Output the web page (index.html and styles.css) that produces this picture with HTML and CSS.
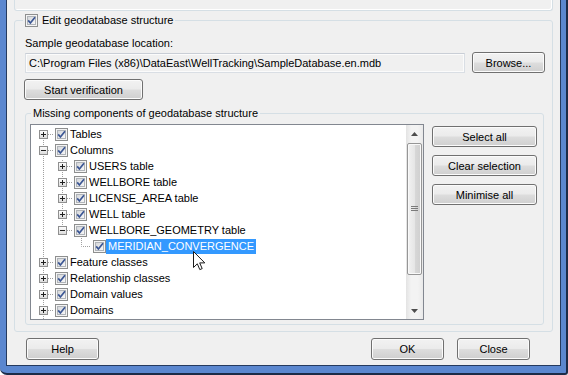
FILE: index.html
```html
<!DOCTYPE html>
<html lang="en">
<head>
    <meta charset="UTF-8">
    <title>Geodatabase structure</title>
    <link rel="stylesheet" href="styles.css">
</head>
<body>

    <svg class="defs" width="0" height="0">
        <defs>
            <linearGradient id="cbFill" x1="0" y1="0" x2="1" y2="1">
                <stop offset="0" stop-color="#d3d5d8"/>
                <stop offset="1" stop-color="#f9f9fa"/>
            </linearGradient>
            <linearGradient id="expFill" x1="0" y1="0" x2="0" y2="1">
                <stop offset="0" stop-color="#ffffff"/>
                <stop offset="1" stop-color="#d9d9d9"/>
            </linearGradient>
            <symbol id="cb" viewBox="0 0 13 13">
                <rect x="0.5" y="0.5" width="12" height="12" fill="#f4f4f4" stroke="#8e8f8f"/>
                <rect x="2.5" y="2.5" width="8" height="8" fill="url(#cbFill)" stroke="#b0b4b9"/>
                <path d="M3.2 6.4 L5.4 9 L10 3.2" fill="none" stroke="#3b5694" stroke-width="1.7"/>
            </symbol>
            <symbol id="plus" viewBox="0 0 9 9">
                <rect x="0.5" y="0.5" width="8" height="8" fill="url(#expFill)" stroke="#8f8f8f"/>
                <path d="M2 4.5 H7 M4.5 2 V7" stroke="#1f1f1f"/>
            </symbol>
            <symbol id="minus" viewBox="0 0 9 9">
                <rect x="0.5" y="0.5" width="8" height="8" fill="url(#expFill)" stroke="#8f8f8f"/>
                <path d="M2 4.5 H7" stroke="#1f1f1f"/>
            </symbol>
        </defs>
    </svg>

    <div class="frame">
        <div class="client">
            <div class="prev-group"></div>

            <fieldset class="group main-group">
                <legend class="check-legend">
                    <svg class="cb" width="13" height="13"><use href="#cb"/></svg>
                    <span>Edit geodatabase structure</span>
                </legend>
                <div class="main-body">
                    <div class="label">Sample geodatabase location:</div>
                    <div class="path-row">
                        <div class="textbox">C:\Program Files (x86)\DataEast\WellTracking\SampleDatabase.en.mdb</div>
                        <button class="btn browse">Browse...</button>
                    </div>
                    <button class="btn verify">Start verification</button>

                    <fieldset class="group missing-group">
                        <legend class="text-legend">Missing components of geodatabase structure</legend>
                        <div class="missing-body">
                            <div class="tree">
                                <svg class="tree-lines" width="375" height="194">
                                    <g stroke="#a0a0a0" stroke-dasharray="1 1" fill="none">
                                        <path d="M12.5 9 V194"/>
                                        <path d="M17 9.5 H22 M17 25.5 H22 M17 137.5 H22 M17 153.5 H22 M17 169.5 H22 M17 185.5 H22"/>
                                        <path d="M31.5 35 V106"/>
                                        <path d="M36 41.5 H41 M36 57.5 H41 M36 73.5 H41 M36 89.5 H41 M36 105.5 H41"/>
                                        <path d="M50.5 113 V121.5 H60"/>
                                    </g>
                                </svg>
                                <div class="rows">
                                    <div class="row lvl0"><svg class="exp" width="9" height="9"><use href="#plus"/></svg><svg class="cb" width="13" height="13"><use href="#cb"/></svg><span class="txt">Tables</span></div>
                                    <div class="row lvl0"><svg class="exp" width="9" height="9"><use href="#minus"/></svg><svg class="cb" width="13" height="13"><use href="#cb"/></svg><span class="txt">Columns</span></div>
                                    <div class="row lvl1"><svg class="exp" width="9" height="9"><use href="#plus"/></svg><svg class="cb" width="13" height="13"><use href="#cb"/></svg><span class="txt">USERS table</span></div>
                                    <div class="row lvl1"><svg class="exp" width="9" height="9"><use href="#plus"/></svg><svg class="cb" width="13" height="13"><use href="#cb"/></svg><span class="txt">WELLBORE table</span></div>
                                    <div class="row lvl1"><svg class="exp" width="9" height="9"><use href="#plus"/></svg><svg class="cb" width="13" height="13"><use href="#cb"/></svg><span class="txt">LICENSE_AREA table</span></div>
                                    <div class="row lvl1"><svg class="exp" width="9" height="9"><use href="#plus"/></svg><svg class="cb" width="13" height="13"><use href="#cb"/></svg><span class="txt">WELL table</span></div>
                                    <div class="row lvl1"><svg class="exp" width="9" height="9"><use href="#minus"/></svg><svg class="cb" width="13" height="13"><use href="#cb"/></svg><span class="txt">WELLBORE_GEOMETRY table</span></div>
                                    <div class="row lvl2"><span class="exp"></span><svg class="cb" width="13" height="13"><use href="#cb"/></svg><span class="txt selected">MERIDIAN_CONVERGENCE</span></div>
                                    <div class="row lvl0"><svg class="exp" width="9" height="9"><use href="#plus"/></svg><svg class="cb" width="13" height="13"><use href="#cb"/></svg><span class="txt">Feature classes</span></div>
                                    <div class="row lvl0"><svg class="exp" width="9" height="9"><use href="#plus"/></svg><svg class="cb" width="13" height="13"><use href="#cb"/></svg><span class="txt">Relationship classes</span></div>
                                    <div class="row lvl0"><svg class="exp" width="9" height="9"><use href="#plus"/></svg><svg class="cb" width="13" height="13"><use href="#cb"/></svg><span class="txt">Domain values</span></div>
                                    <div class="row lvl0"><svg class="exp" width="9" height="9"><use href="#plus"/></svg><svg class="cb" width="13" height="13"><use href="#cb"/></svg><span class="txt">Domains</span></div>
                                </div>
                                <div class="scrollbar">
                                    <div class="sb-btn">
                                        <svg width="7" height="4"><path d="M0 4 L3.5 0 L7 4 Z" fill="#4d4d4d"/></svg>
                                    </div>
                                    <div class="sb-track">
                                        <div class="sb-thumb">
                                            <svg width="7" height="6"><path d="M0 0.5 H7 M0 2.5 H7 M0 4.5 H7" stroke="#7a7a7a"/></svg>
                                        </div>
                                    </div>
                                    <div class="sb-btn">
                                        <svg width="7" height="4"><path d="M0 0 L3.5 4 L7 0 Z" fill="#4d4d4d"/></svg>
                                    </div>
                                </div>
                                <svg class="cursor" width="13" height="20" viewBox="0 0 13 20">
                                    <path d="M0.5 0.5 V16.5 L4.3 12.8 L6.8 18.6 L9.2 17.6 L6.7 11.9 L11.8 11.9 Z" fill="#ffffff" stroke="#1a1a1a"/>
                                </svg>
                            </div>
                            <div class="side-buttons">
                                <button class="btn side">Select all</button>
                                <button class="btn side">Clear selection</button>
                                <button class="btn side">Minimise all</button>
                            </div>
                        </div>
                    </fieldset>
                </div>
            </fieldset>

            <div class="footer">
                <button class="btn foot">Help</button>
                <div class="foot-right">
                    <button class="btn foot">OK</button>
                    <button class="btn foot">Close</button>
                </div>
            </div>
        </div>
    </div>

</body>
</html>
```

FILE: styles.css
```css
body {
    margin: 0;
    padding: 0;
    font-family: 'Liberation Sans', Arial, sans-serif;
    font-size: 11px;
    color: #000;
    overflow: hidden;
}
.defs {
    position: absolute;
}
.frame {
    width: 555px;
    height: 367px;
    padding: 0 5px 6px 6px;
    background: #5b87cf;
    border-right: 2px solid #1c2b47;
    border-bottom: 2px solid #1c2b47;
    border-bottom-left-radius: 7px;
    border-bottom-right-radius: 3px;
}
.client {
    height: 365px;
    padding: 0 7px;
    background: #f0f0f0;
    border: 1px solid #253a5e;
    border-top: none;
}

/* group boxes */
.prev-group {
    height: 10px;
    border: 1px solid #d5dfe5;
    border-top: none;
    border-radius: 0 0 3px 3px;
    box-shadow: inset -1px -1px 0 #fff;
}
.group {
    margin: 0;
    border: 1px solid #d5dfe5;
    border-radius: 3px;
    min-width: 0;
}
.main-group {
    margin-top: 3px;
    padding: 0 8px 6px 10px;
}
.check-legend {
    display: flex;
    align-items: center;
    height: 13px;
    padding: 0 2px;
    margin-left: -2px;
    line-height: 13px;
}
.check-legend .cb {
    margin-right: 4px;
}
.main-body {
    padding-top: 10px;
}
.label {
    line-height: 13px;
}
.path-row {
    display: flex;
    align-items: flex-end;
    margin-top: 2px;
}
.textbox {
    flex-shrink: 0;
    width: 435px;
    height: 18px;
    line-height: 18px;
    padding-left: 3px;
    border: 1px solid #d9dee4;
    border-top-color: #c9ced6;
    background: #f0f0f0;
    box-shadow: inset 0 0 0 1px #fbfbfb;
    white-space: nowrap;
    overflow: hidden;
}

/* buttons */
.btn {
    flex-shrink: 0;
    font-family: 'Liberation Sans', Arial, sans-serif;
    font-size: 11px;
    color: #000;
    padding: 0;
    border: 1px solid #707070;
    border-radius: 3px;
    background: linear-gradient(#f2f2f2 0%, #ebebeb 48%, #dddddd 52%, #cfcfcf 100%);
    box-shadow: inset 0 0 0 1px #fbfbfb;
}
.browse {
    width: 73px;
    height: 21px;
    margin-left: 7px;
}
.verify {
    display: block;
    width: 119px;
    height: 21px;
    margin: 6px 0 0 -1px;
}
.missing-group {
    margin-top: 7px;
    padding: 0 4px 4px 4px;
}
.text-legend {
    padding: 0 2px;
    margin-left: 1px;
    line-height: 13px;
}
.missing-body {
    display: flex;
    align-items: flex-start;
    margin-top: 4px;
}

/* tree view */
.tree {
    position: relative;
    flex-shrink: 0;
    display: flex;
    width: 392px;
    height: 194px;
    border: 1px solid #828790;
    background: #fff;
}
.tree-lines {
    position: absolute;
    left: 0;
    top: 0;
}
.rows {
    position: relative;
    flex: 1;
    padding-top: 1px;
}
.row {
    display: flex;
    align-items: center;
    height: 16px;
    white-space: nowrap;
}
.lvl0 { padding-left: 3px; }
.lvl1 { padding-left: 22px; }
.lvl2 { padding-left: 41px; }
.exp {
    display: block;
    width: 9px;
    height: 9px;
    margin: 0 6px 0 5px;
}
.row .cb {
    display: block;
    margin-left: 1px;
}
.txt {
    padding: 0 2px;
    line-height: 15px;
}
.selected {
    background: #3399ff;
    color: #fff;
}
.cursor {
    position: absolute;
    left: 162px;
    top: 126px;
}

/* scroll bar */
.scrollbar {
    display: flex;
    flex-direction: column;
    width: 17px;
    background: linear-gradient(to right, #e3e3e3, #f3f3f3 30%, #f3f3f3 70%, #e9e9e9);
}
.sb-btn {
    display: flex;
    align-items: center;
    justify-content: center;
    height: 17px;
}
.sb-track {
    flex: 1;
    padding: 1px 0;
}
.sb-thumb {
    display: flex;
    align-items: center;
    justify-content: center;
    height: 130px;
    margin: 0 1px;
    border: 1px solid #969696;
    border-radius: 2px;
    background: linear-gradient(to right, #f2f2f2, #e6e6e6 50%, #d8d8d8 51%, #cfcfcf);
    box-shadow: inset 0 0 0 1px #f9f9f9;
}

.side-buttons {
    display: flex;
    flex-direction: column;
    gap: 8px;
    margin: 2px 0 0 8px;
}
.side {
    width: 105px;
    height: 21px;
}

/* bottom buttons */
.footer {
    display: flex;
    justify-content: space-between;
    margin-top: 6px;
    padding: 0 23px 0 12px;
}
.foot-right {
    display: flex;
    gap: 13px;
}
.foot {
    width: 73px;
    height: 22px;
}
```
